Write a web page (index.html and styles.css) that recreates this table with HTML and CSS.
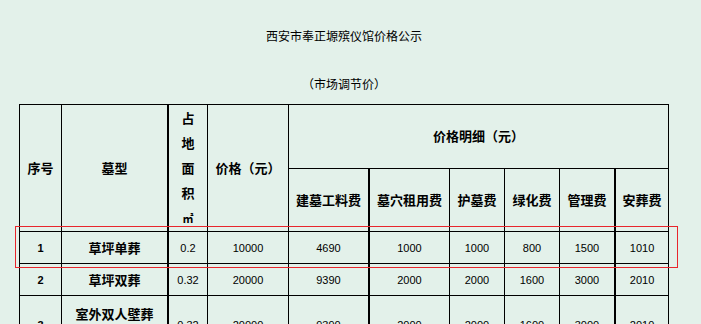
FILE: index.html
```html
<!DOCTYPE html>
<html lang="zh-CN">
<head>
<meta charset="utf-8">
<title>西安市奉正塬殡仪馆价格公示</title>
<link rel="stylesheet" href="styles.css">
</head>
<body>
<div class="page">
  <h1 class="title">西安市奉正塬殡仪馆价格公示</h1>
  <p class="subtitle">（市场调节价）</p>
  <table class="prices">
    <colgroup>
      <col class="w42"><col class="w107"><col class="w39"><col class="w81"><col class="w81">
      <col class="w80"><col class="w55"><col class="w55"><col class="w56"><col class="w53">
    </colgroup>
    <thead>
      <tr class="hrow">
        <th rowspan="2">序号</th>
        <th rowspan="2" class="thick">墓型</th>
        <th rowspan="2" class="vert">占<br>地<br>面<br>积<br><span class="unit">㎡</span></th>
        <th rowspan="2">价格（元）</th>
        <th colspan="6">价格明细（元）</th>
      </tr>
      <tr class="hrow">
        <th class="thick">建墓工料费</th>
        <th>墓穴租用费</th>
        <th>护墓费</th>
        <th>绿化费</th>
        <th class="thick">管理费</th>
        <th>安葬费</th>
      </tr>
    </thead>
    <tbody>
      <tr class="drow">
        <td class="idx">1</td><td class="name thick">草坪单葬</td><td class="num">0.2</td><td class="num">10000</td>
        <td class="num thick">4690</td><td class="num">1000</td><td class="num">1000</td><td class="num">800</td><td class="num thick">1500</td><td class="num">1010</td>
      </tr>
      <tr class="drow">
        <td class="idx">2</td><td class="name thick">草坪双葬</td><td class="num">0.32</td><td class="num">20000</td>
        <td class="num thick">9390</td><td class="num">2000</td><td class="num">2000</td><td class="num">1600</td><td class="num thick">3000</td><td class="num">2010</td>
      </tr>
      <tr class="drow tall">
        <td class="idx">3</td><td class="name thick top">室外双人壁葬</td><td class="num">0.32</td><td class="num">20000</td>
        <td class="num thick">9390</td><td class="num">2000</td><td class="num">2000</td><td class="num">1600</td><td class="num thick">3000</td><td class="num">2010</td>
      </tr>
    </tbody>
  </table>
</div>
<div class="highlight"></div>
</body>
</html>
```

FILE: styles.css
```css
html, body {
  margin: 0;
  padding: 0;
  background: #e3f1ea;
  color: #000;
  font-family: "Noto Sans CJK SC", "Liberation Sans", sans-serif;
}

.page {
  width: 650px;
  margin-left: 19px;
  padding-top: 28px;
}

.title {
  margin: 0;
  font-size: 12px;
  line-height: 16px;
  font-weight: normal;
  text-align: center;
}

.subtitle {
  margin: 32px 0 0;
  font-size: 12px;
  line-height: 16px;
  text-align: center;
}

.prices {
  margin-top: 12px;
  width: 650px;
  table-layout: fixed;
  border-collapse: separate;
  border-spacing: 0;
  border-top: 1px solid #000;
  border-left: 1px solid #000;
}

.w42 { width: 42px; }
.w107 { width: 107px; }
.w39 { width: 39px; }
.w81 { width: 81px; }
.w80 { width: 80px; }
.w55 { width: 55px; }
.w56 { width: 56px; }
.w53 { width: 53px; }

.prices th,
.prices td {
  box-sizing: border-box;
  padding: 0;
  border-right: 1px solid #000;
  border-bottom: 1px solid #000;
  text-align: center;
  vertical-align: middle;
}

.prices .thick {
  border-right-width: 2px;
}

.prices th {
  font-size: 13px;
  font-weight: bold;
  line-height: 16px;
}

.hrow {
  height: 63px;
}

.prices th.vert {
  line-height: 25px;
}

.vert .unit {
  font-size: 11px;
}

.drow {
  height: 32px;
}

.drow.tall {
  height: 58px;
}

.prices td.name {
  font-size: 13px;
  font-weight: bold;
  line-height: 16px;
}

.prices td.name.top {
  padding-bottom: 22px;
}

.prices td.num {
  font-family: "Liberation Sans", sans-serif;
  font-size: 11px;
  line-height: 14px;
}

.prices td.idx {
  font-family: "Liberation Sans", sans-serif;
  font-size: 11px;
  font-weight: bold;
  line-height: 14px;
}

.highlight {
  position: absolute;
  left: 15px;
  top: 226px;
  width: 663px;
  height: 42px;
  box-sizing: border-box;
  border: 1px solid #e8262c;
}
```
